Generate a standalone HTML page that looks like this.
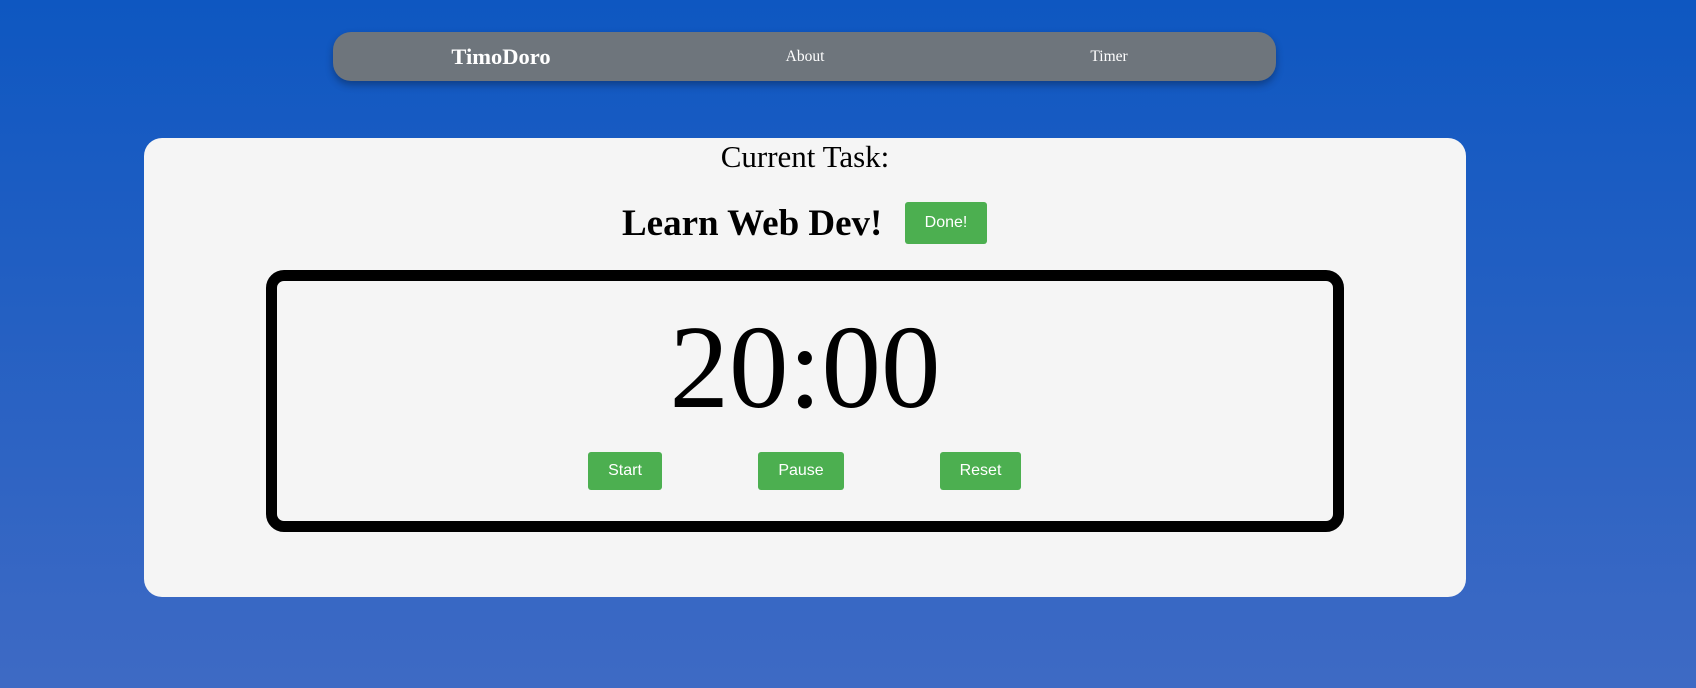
<!DOCTYPE html>
<html><head><style>
html,body{margin:0;padding:0;width:1696px;height:688px;overflow:hidden}
body{background:linear-gradient(180deg,#0e57c1 0%,#3e6ac4 100%);font-family:"Liberation Serif",serif;position:relative}
.nav{position:absolute;left:333px;top:32px;width:943px;height:49px;background:#6e757c;border-radius:18px;box-shadow:0 4px 8px rgba(0,0,0,.3);color:#fff}
.nav span{position:absolute;top:0;line-height:49px;transform:translateX(-50%)}
.card{position:absolute;left:144px;top:138px;width:1322px;height:459px;background:#f5f5f5;border-radius:18px}
.t{position:absolute;left:0;right:0;text-align:center;white-space:nowrap}
.btn{position:absolute;background:#4caf50;color:#fff;font-family:"Liberation Sans",sans-serif;font-size:16px;border-radius:3px;display:flex;align-items:center;justify-content:center}
.box{position:absolute;left:266px;top:270px;width:1056px;height:240px;border:11px solid #000;border-radius:18px}
</style></head><body>
<div class="nav">
<span style="left:168px;font-weight:bold;font-size:22.5px">TimoDoro</span>
<span style="left:472px;font-size:15.5px">About</span>
<span style="left:776px;font-size:15.5px">Timer</span>
</div>
<div class="card"></div>
<div class="t" style="top:139px;left:144px;width:1322px;font-size:31px;line-height:36px">Current Task:</div>
<div style="position:absolute;left:622px;top:201px;font-size:37px;font-weight:bold;line-height:46px">Learn Web Dev!</div>
<div class="btn" style="left:905px;top:202px;width:82px;height:42px">Done!</div>
<div class="box"></div>
<div class="t" style="top:308px;left:144px;width:1322px;font-size:119px;line-height:119px">20:00</div>
<div class="btn" style="left:588px;top:452px;width:74px;height:38px">Start</div>
<div class="btn" style="left:758px;top:452px;width:86px;height:38px">Pause</div>
<div class="btn" style="left:940px;top:452px;width:81px;height:38px">Reset</div>
</body></html>
